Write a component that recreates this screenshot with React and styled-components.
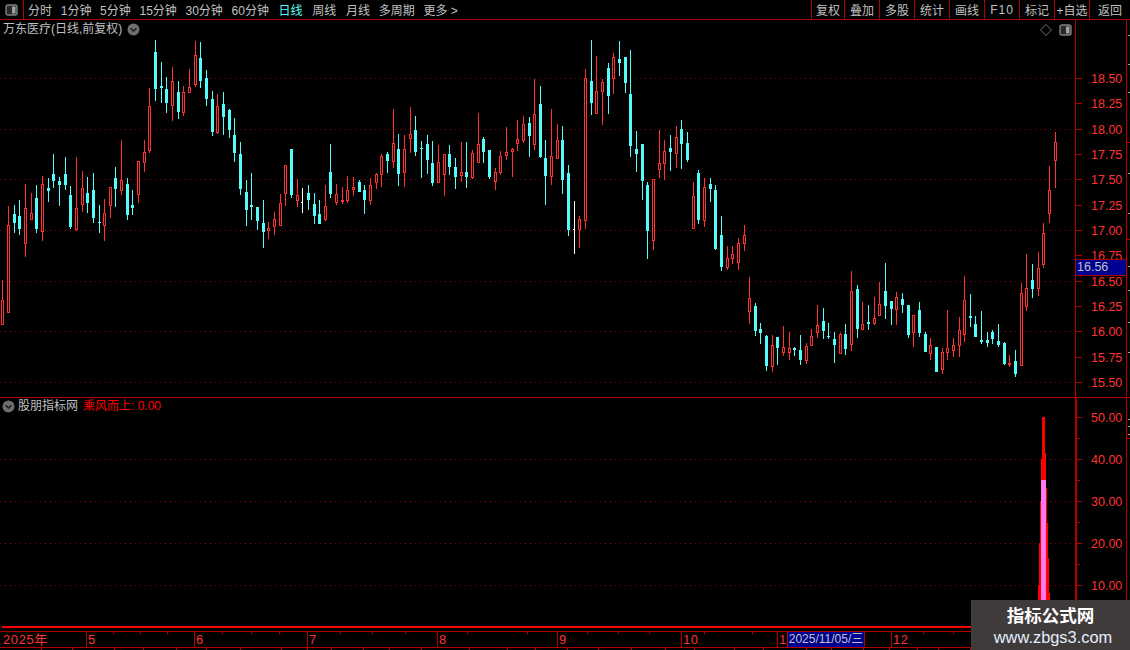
import React from 'react'
import styled, { createGlobalStyle } from 'styled-components'

const RED = '#ff3232'
const CYAN = '#54fcfc'
const LINE = '#b00000'
const GREY = '#c0c0c0'

const GlobalStyle = createGlobalStyle`
  html, body {
    margin: 0;
    background: #000;
    overflow: hidden;
  }
`

// candles: [x, kind, high, bodyTop, bodyBottom, low], read off the reference at 3x, so base + v / 3
const segments = [
  { bx: 0, by: 60, rows: [
    [25, 'r', 438, 495, 760, 760], [43, 'c', 435, 462, 489, 519], [58, 'c', 420, 468, 507, 525],
    [76, 'r', 372, 444, 552, 591], [94, 'r', 399, 459, 480, 480], [109, 'c', 375, 414, 507, 519],
    [127, 'r', 348, 372, 516, 543], [145, 'c', 354, 384, 393, 426], [160, 'c', 282, 342, 363, 384],
    [178, 'c', 351, 363, 375, 438], [196, 'c', 291, 342, 375, 390], [211, 'c', 378, 405, 501, 507],
    [229, 'r', 291, 444, 510, 513], [247, 'r', 333, 384, 435, 456], [262, 'c', 351, 399, 429, 459],
    [280, 'c', 339, 390, 474, 489], [298, 'c', 435, 486, 489, 519], [313, 'r', 417, 459, 498, 543],
    [331, 'r', 381, 381, 438, 474], [346, 'c', 321, 354, 387, 441], [364, 'r', 240, 360, 393, 405],
    [382, 'c', 354, 372, 465, 480], [397, 'c', 390, 435, 444, 465], [415, 'r', 303, 303, 405, 429],
    [433, 'r', 240, 276, 309, 336], [448, 'r', 84, 138, 273, 279], [466, 'c', -60, -24, 87, 123],
    [484, 'c', 6, 78, 84, 129], [499, 'c', 51, 87, 129, 159], [517, 'r', 21, 63, 138, 183],
    [535, 'c', 63, 96, 156, 177], [550, 'r', 78, 96, 159, 168], [568, 'r', 27, 81, 99, 99],
    [586, 'r', -57, -15, 75, 81], [601, 'c', -54, -6, 63, 84], [619, 'c', 30, 54, 117, 138],
    [637, 'c', 93, 117, 216, 228], [652, 'r', 102, 138, 219, 222], [670, 'c', 96, 132, 171, 225],
    [688, 'c', 147, 150, 210, 234], [703, 'c', 174, 225, 279, 306], [721, 'c', 246, 282, 387, 405],
    [739, 'c', 360, 396, 450, 498], [754, 'c', 339, 435, 441, 480], [772, 'c', 441, 441, 483, 510],
    [790, 'c', 420, 489, 516, 564], [805, 'r', 486, 504, 513, 537], [823, 'r', 456, 477, 500, 525],
    [841, 'r', 402, 429, 498, 498], [856, 'r', 315, 315, 402, 438], [874, 'c', 267, 267, 405, 414],
    [892, 'r', 357, 405, 423, 441],
  ] },
  { bx: 300, by: 60, rows: [
    [7, 'w', 384, 426, 429, 459], [25, 'c', 375, 399, 420, 450], [43, 'c', 399, 432, 468, 492],
    [58, 'c', 420, 462, 492, 492], [76, 'r', 375, 438, 480, 483], [91, 'c', 252, 336, 402, 414],
    [109, 'r', 372, 402, 429, 435], [127, 'r', 381, 420, 426, 432], [142, 'r', 348, 390, 423, 429],
    [160, 'r', 351, 381, 390, 408], [178, 'c', 360, 366, 396, 396], [193, 'c', 375, 390, 420, 462],
    [211, 'r', 354, 375, 423, 435], [229, 'r', 339, 342, 369, 387], [244, 'r', 282, 288, 345, 381],
    [262, 'c', 276, 282, 303, 339], [280, 'r', 147, 249, 306, 324], [295, 'c', 222, 267, 342, 378],
    [313, 'r', 225, 267, 339, 381], [331, 'r', 141, 222, 237, 279], [346, 'c', 168, 210, 276, 288],
    [364, 'c', 243, 264, 267, 354], [382, 'c', 225, 252, 300, 342], [397, 'c', 243, 309, 369, 378],
    [415, 'r', 255, 306, 369, 369], [433, 'r', 282, 282, 345, 408], [448, 'c', 255, 282, 321, 345],
    [466, 'c', 294, 321, 351, 387], [484, 'r', 246, 336, 348, 366], [499, 'c', 246, 336, 351, 384],
    [517, 'r', 270, 279, 354, 357], [535, 'r', 159, 252, 309, 309], [550, 'c', 231, 237, 276, 309],
    [568, 'c', 270, 270, 351, 357], [586, 'r', 324, 336, 366, 390], [601, 'r', 273, 288, 339, 345],
    [619, 'r', 201, 276, 288, 300], [637, 'r', 264, 267, 276, 351], [652, 'r', 180, 237, 252, 273],
    [670, 'r', 168, 192, 243, 249], [688, 'c', 171, 189, 228, 291], [703, 'r', 57, 162, 255, 270],
    [721, 'c', 78, 132, 291, 294], [736, 'c', 240, 294, 348, 435], [754, 'r', 147, 288, 351, 375],
    [772, 'r', 192, 240, 297, 297], [787, 'c', 198, 240, 360, 402], [805, 'c', 315, 339, 510, 528],
    [823, 'w', 423, 507, 510, 582], [838, 'r', 468, 477, 510, 564], [856, 'r', 27, 54, 483, 507],
  ] },
  { bx: 560, by: 30, rows: [
    [94, 'c', 30, 153, 219, 255], [109, 'r', 78, 183, 252, 252], [127, 'r', 147, 156, 186, 285],
    [145, 'c', 99, 114, 198, 252], [160, 'r', 69, 81, 147, 192], [178, 'c', 33, 87, 99, 138],
    [196, 'c', 81, 81, 159, 189], [211, 'c', 60, 192, 348, 381], [229, 'c', 303, 357, 372, 426],
    [247, 'c', 342, 342, 453, 510], [262, 'c', 456, 465, 603, 687], [280, 'r', 447, 447, 633, 660],
    [298, 'r', 300, 399, 420, 444], [313, 'r', 330, 363, 402, 450], [331, 'c', 315, 354, 366, 423],
    [349, 'r', 288, 321, 372, 414], [364, 'c', 270, 297, 342, 417], [382, 'c', 306, 339, 390, 396],
    [400, 'r', 456, 498, 597, 597], [415, 'c', 420, 429, 570, 582], [433, 'r', 444, 471, 573, 591],
    [451, 'c', 444, 462, 477, 516], [466, 'c', 465, 480, 657, 660], [484, 'c', 558, 615, 711, 723],
    [502, 'r', 648, 684, 714, 720], [517, 'r', 648, 672, 687, 702], [535, 'r', 624, 639, 699, 720],
    [553, 'r', 585, 615, 642, 663],
  ] },
  { bx: 740, by: 250, rows: [
    [28, 'r', 81, 144, 186, 222], [46, 'c', 159, 168, 243, 258], [61, 'c', 219, 237, 249, 282],
    [79, 'c', 255, 258, 348, 363], [97, 'r', 255, 285, 351, 366], [112, 'c', 261, 261, 294, 345],
    [130, 'r', 228, 291, 309, 318], [148, 'r', 246, 294, 309, 330], [163, 'c', 291, 294, 300, 318],
    [181, 'c', 255, 300, 330, 345], [199, 'r', 279, 288, 333, 342], [214, 'r', 237, 258, 288, 288],
    [232, 'r', 165, 225, 249, 264], [250, 'c', 174, 213, 243, 267], [265, 'c', 219, 258, 261, 267],
    [283, 'c', 246, 267, 285, 339], [301, 'r', 249, 252, 312, 312], [316, 'c', 222, 252, 297, 315],
    [334, 'r', 63, 123, 285, 303], [352, 'c', 105, 117, 237, 264], [367, 'r', 156, 222, 240, 240],
    [385, 'c', 165, 216, 222, 240], [403, 'r', 141, 204, 222, 225], [418, 'r', 96, 162, 198, 198],
    [436, 'c', 39, 123, 168, 207], [454, 'c', 153, 153, 177, 225], [469, 'r', 126, 141, 180, 225],
    [487, 'c', 129, 147, 165, 189], [505, 'c', 165, 165, 255, 264], [520, 'r', 195, 195, 249, 291],
    [538, 'c', 156, 180, 249, 261], [556, 'c', 246, 252, 306, 306], [571, 'r', 264, 285, 312, 330],
    [589, 'c', 291, 291, 366, 366], [607, 'r', 294, 306, 360, 372], [622, 'r', 180, 294, 309, 330],
    [640, 'r', 264, 285, 303, 321], [658, 'r', 201, 240, 288, 321], [673, 'r', 78, 150, 255, 276],
    [691, 'c', 132, 198, 204, 231], [706, 'c', 198, 222, 261, 261], [724, 'c', 183, 270, 276, 282],
    [742, 'c', 246, 270, 279, 291], [757, 'c', 240, 246, 267, 282], [775, 'c', 222, 273, 285, 291],
    [793, 'c', 276, 279, 342, 345], [808, 'r', 315, 339, 345, 351], [826, 'c', 300, 333, 372, 381],
    [844, 'r', 99, 129, 348, 348], [859, 'r', 12, 114, 171, 183], [877, 'c', 42, 90, 117, 144],
  ] },
  { bx: 980, by: 120, rows: [
    [175, 'r', 396, 444, 507, 528], [190, 'r', 309, 339, 435, 444],
    [208, 'r', 138, 210, 282, 309], [226, 'r', 36, 66, 123, 204],
  ] },
]

const candles = [
  { x: 2, kind: 'r', high: 280, top: 300, bottom: 325, low: 325 },
  ...segments.flatMap(({ bx, by, rows }) =>
    rows.map(([x, kind, high, top, bottom, low]) => ({
      x: Math.floor(bx + x / 3),
      kind,
      high: Math.round(by + high / 3),
      top: Math.round(by + top / 3),
      bottom: Math.round(by + bottom / 3),
      low: Math.round(by + low / 3),
    }))
  ),
]

const priceLabels = ['18.50', '18.25', '18.00', '17.75', '17.50', '17.25', '17.00', '16.75', '16.50', '16.25', '16.00', '15.75', '15.50']
const priceY = (i) => Math.round(78 + i * 25.33)
const priceGrid = [0, 2, 4, 6, 8, 10, 12].map(priceY)

const indicatorLabels = ['50.00', '40.00', '30.00', '20.00', '10.00']
const indicatorGrid = [458, 500, 542, 584]

const leftTools = [
  ['分时'], ['1分钟'], ['5分钟'], ['15分钟'], ['30分钟'], ['60分钟'],
  ['日线', true, 1], ['周线', false, 1], ['月线', false, 1], ['多周期'],
]
const rightTools = [['复权', 33], ['叠加', 35], ['多股', 35], ['统计', 35], ['画线', 35], ['F10', 35], ['标记', 35], ['+自选', 35], ['返回', 41]]

const months = [['2025年', 86], ['5', 108], ['6', 113], ['7', 130], ['8', 120], ['9', 124], ['10', 96], ['11', 114], ['12', 239]]
const monthTicks = [113, 140, 167, 222, 251, 279, 340, 372, 405, 467, 527, 587, 618, 649, 704, 752, 923, 953]
const statusCells = [42, 31, 42, 29, 33, 30, 34, 41, 26, 24, 32, 26, 32, 48, 38, 28, 32, 31, 33, 34, 29, 40, 29, 43, 25, 32, 26, 28, 21, 32]

const Page = styled.div`
  position: relative;
  width: 1130px;
  height: 650px;
  display: flex;
  flex-direction: column;
  background: #000;
  overflow: hidden;
  font-family: "Liberation Sans", "Noto Sans CJK SC", sans-serif;
  font-size: 12px;
  color: ${GREY};
`
const Toolbar = styled.div`
  height: 19px;
  flex: none;
  display: flex;
  border-bottom: 1px solid ${LINE};
`
const ToggleCell = styled.div`
  width: 23px;
  display: flex;
  align-items: center;
  justify-content: center;
  border-right: 1px solid ${LINE};
`
const LeftTools = styled.div`
  flex: 1;
  display: flex;
  align-items: center;
  gap: 8.7px;
  padding-left: 4px;
`
const Tool = styled.span`
  margin-left: ${(p) => p.$push || 0}px;
  color: ${(p) => (p.$active ? CYAN : GREY)};
  white-space: nowrap;
`
const RightTool = styled.div`
  width: ${(p) => p.$w}px;
  box-sizing: border-box;
  display: flex;
  align-items: center;
  justify-content: center;
  border-left: 1px solid ${LINE};
  letter-spacing: ${(p) => (p.$latin ? '1px' : '0')};
  white-space: nowrap;
`
const Panel = styled.section`
  position: relative;
  flex: none;
  height: ${(p) => p.$h}px;
  display: flex;
  border-bottom: ${(p) => (p.$ruled ? `1px solid ${LINE}` : 'none')};
`
const Plot = styled.div`
  position: relative;
  width: 1075px;
  flex: none;
`
const ChartSvg = styled.svg`
  display: block;
  shape-rendering: crispEdges;
`
const PanelTitle = styled.div`
  position: absolute;
  left: ${(p) => p.$left}px;
  top: ${(p) => p.$top}px;
  height: 14px;
  line-height: 14px;
  display: flex;
  align-items: center;
  gap: ${(p) => p.$gap}px;
  white-space: nowrap;
`
const RedText = styled.span`
  color: #f00;
  margin-left: 2px;
`
const PlotIcons = styled.div`
  position: absolute;
  right: 3px;
  top: 4px;
  display: flex;
  align-items: center;
  gap: 7px;
`
const Axis = styled.div`
  position: relative;
  flex: 1;
  border-left: ${(p) => p.$line}px solid ${LINE};
`
const AxisLabel = styled.text`
  fill: ${RED};
  font-family: "Liberation Sans", sans-serif;
  font-size: 12.5px;
  shape-rendering: auto;
`
const PriceTag = styled.div`
  position: absolute;
  left: 0;
  top: 239px;
  width: 49px;
  height: 15px;
  background: #000090;
  border-top: 1px solid ${LINE};
  border-bottom: 1px solid ${LINE};
  color: ${GREY};
  font-size: 12.5px;
  line-height: 15px;
  padding-left: 1px;
`
const ThickRule = styled.div`
  flex: none;
  height: 2px;
  margin-left: 2px;
  margin-bottom: 3px;
  background: #f00;
`
const DateAxis = styled.div`
  position: relative;
  flex: none;
  height: 15px;
  display: flex;
  border-top: 1px solid ${LINE};
  border-bottom: 1px solid ${LINE};
`
const Month = styled.div`
  width: ${(p) => p.$w}px;
  flex: none;
  box-sizing: border-box;
  padding-left: ${(p) => (p.$first ? 3 : 1)}px;
  border-left: ${(p) => (p.$first ? 'none' : `1px solid ${LINE}`)};
  color: ${RED};
  font-size: 13px;
  line-height: 15px;
  letter-spacing: 0.6px;
  white-space: nowrap;
`
const MonthTicks = styled.svg`
  position: absolute;
  left: 0;
  top: 0;
  shape-rendering: crispEdges;
`
const DateCursor = styled.div`
  position: absolute;
  left: 787px;
  top: 0;
  width: 78px;
  height: 15px;
  background: #000090;
  border-left: 1px solid ${LINE};
  border-right: 1px solid ${LINE};
  box-sizing: border-box;
  color: ${GREY};
  font-size: 12px;
  line-height: 15px;
  text-align: center;
  white-space: nowrap;
`
const StatusStrip = styled.div`
  flex: 1;
  display: flex;
`
const StatusCell = styled.div`
  width: ${(p) => p.$w}px;
  flex: none;
  box-sizing: border-box;
  border-right: 1px solid ${LINE};
`
const Watermark = styled.div`
  position: absolute;
  right: 0;
  bottom: 0;
  width: 159px;
  height: 50px;
  background: #403b3b;
  display: flex;
  flex-direction: column;
  align-items: center;
  padding-top: 3px;
  box-sizing: border-box;
  color: #fff;
`
const WatermarkTitle = styled.div`
  font-family: "Noto Sans CJK SC", sans-serif;
  font-weight: 700;
  font-size: 17.5px;
  line-height: 24px;
`
const WatermarkUrl = styled.div`
  margin-left: 5px;
  font-family: "Liberation Sans", sans-serif;
  font-size: 16.4px;
  line-height: 20px;
  color: #e4eeff;
`

const PaneIcon = () => (
  <svg width="13" height="12" viewBox="0 0 13 12">
    <rect x="1" y="1" width="11" height="10" rx="2" fill="#2a2a2a" stroke="#808080" strokeWidth="1.4" />
    <rect x="7" y="2.5" width="3.5" height="7" fill="#a0a0a0" />
  </svg>
)

const DownBadge = () => (
  <svg width="13" height="13" viewBox="0 0 13 13">
    <circle cx="6.5" cy="6.5" r="6" fill="#6e6e6e" />
    <path d="M3.5 5.2 L6.5 8 L9.5 5.2" fill="none" stroke="#1c1c1c" strokeWidth="1.5" />
  </svg>
)

const Candle = ({ x, kind, high, top, bottom, low }) => {
  const color = kind === 'r' ? RED : kind === 'c' ? CYAN : '#fff'
  const h = Math.max(bottom - top, 1)
  return (
    <g>
      <rect x={x} y={high} width="1" height={low - high} fill={color} />
      {kind === 'r' ? (
        <rect x={x - 0.5} y={top + 0.5} width="2" height={Math.max(h - 1, 1)} fill="#000" stroke={color} />
      ) : kind === 'w' ? (
        <rect x={x - 1} y={top} width="1" height="1" fill={color} />
      ) : (
        <rect x={x - 1} y={top} width="3" height={h} fill={color} />
      )}
    </g>
  )
}

const Dotted = ({ y }) => (
  <line x1="0" x2="1075" y1={y + 0.5} y2={y + 0.5} stroke="#8c0000" strokeDasharray="1 4" />
)

// stepped histogram of the indicator, one outline in screen coordinates
const spike =
  '1042,416 1045,416 1045,452 1046,452 1046,487 1047,487 1047,522 1048,522 1048,557 1049,557 1049,592 1050,592 1050,625 ' +
  '1038,625 1038,584 1039,584 1039,542 1040,542 1040,500 1041,500 1041,458 1042,458'

export default function App() {
  return (
    <Page>
      <GlobalStyle />
      <Toolbar>
        <ToggleCell>
          <PaneIcon />
        </ToggleCell>
        <LeftTools>
          {leftTools.map(([label, active, push]) => (
            <Tool key={label} $active={active} $push={push}>{label}</Tool>
          ))}
          <Tool>更多 &gt;</Tool>
        </LeftTools>
        {rightTools.map(([label, w]) => (
          <RightTool key={label} $w={w} $latin={label === 'F10'}>{label}</RightTool>
        ))}
      </Toolbar>

      <Panel $h={377} $ruled>
        <Plot>
          <ChartSvg width="1075" height="376" viewBox="0 20 1075 376">
            {priceGrid.map((y) => <Dotted key={y} y={y} />)}
            {candles.map((c) => <Candle key={c.x} {...c} />)}
          </ChartSvg>
          <PanelTitle $left={3} $top={2} $gap={5}>
            万东医疗(日线,前复权)
            <DownBadge />
          </PanelTitle>
          <PlotIcons>
            <svg width="12" height="12" viewBox="0 0 12 12">
              <path d="M6 0.5 L11.5 6 L6 11.5 L0.5 6 Z" fill="none" stroke="#6e6e6e" />
            </svg>
            <PaneIcon />
          </PlotIcons>
        </Plot>
        <Axis $line={1}>
          <ChartSvg width="54" height="376" viewBox="1076 20 54 376">
            <line x1="1126.5" x2="1126.5" y1="20" y2="396" stroke={LINE} />
            {priceLabels.map((label, i) => (
              <g key={label}>
                <rect x="1076" y={priceY(i)} width="6" height="1" fill={LINE} />
                <AxisLabel x="1091" y={priceY(i) + 5}>{label}</AxisLabel>
              </g>
            ))}
            {[142, 239].map((y) => <rect key={y} x="1127" y={y} width="3" height="1" fill={LINE} />)}
            {[35, 64, 92, 173, 213, 266, 290, 322, 352].map((y) => (
              <rect key={y} x="1128" y={y} width="2" height="1" fill="#a0a0a0" />
            ))}
          </ChartSvg>
          <PriceTag>16.56</PriceTag>
        </Axis>
      </Panel>

      <Panel $h={228}>
        <Plot>
          <ChartSvg width="1075" height="228" viewBox="0 397 1075 228">
            {indicatorGrid.map((y) => <Dotted key={y} y={y} />)}
            <polygon points={spike} fill="#f00" />
            <rect x="1041" y="479" width="5" height="146" fill="#ff78f0" />
          </ChartSvg>
          <PanelTitle $left={2} $top={1} $gap={3}>
            <DownBadge />
            股朋指标网
            <RedText>乘风而上: 0.00</RedText>
          </PanelTitle>
        </Plot>
        <Axis $line={2}>
          <ChartSvg width="53" height="228" viewBox="1077 397 53 228">
            <line x1="1126.5" x2="1126.5" y1="397" y2="625" stroke={LINE} />
            {indicatorLabels.map((label, i) => (
              <g key={label}>
                <rect x="1077" y={416 + i * 42} width="5" height="1" fill={LINE} />
                <rect x="1077" y={437 + i * 42} width="3" height="1" fill={LINE} />
                <AxisLabel x="1091" y={421 + i * 42}>{label}</AxisLabel>
              </g>
            ))}
            {[418, 425, 433].map((y) => <rect key={y} x="1128" y={y} width="2" height="1" fill="#a0a0a0" />)}
            <rect x="1127" y="437" width="3" height="1" fill={LINE} />
          </ChartSvg>
        </Axis>
      </Panel>

      <ThickRule />
      <DateAxis>
        {months.map(([label, w], i) => (
          <Month key={label} $w={w} $first={i === 0}>{label}</Month>
        ))}
        <MonthTicks width="1130" height="3">
          {monthTicks.map((x) => <rect key={x} x={x} y="0" width="1" height="2" fill={LINE} />)}
        </MonthTicks>
        <DateCursor>2025/11/05/三</DateCursor>
      </DateAxis>
      <StatusStrip>
        {statusCells.map((w, i) => <StatusCell key={i} $w={w} />)}
      </StatusStrip>

      <Watermark>
        <WatermarkTitle>指标公式网</WatermarkTitle>
        <WatermarkUrl>www.zbgs3.com</WatermarkUrl>
      </Watermark>
    </Page>
  )
}
